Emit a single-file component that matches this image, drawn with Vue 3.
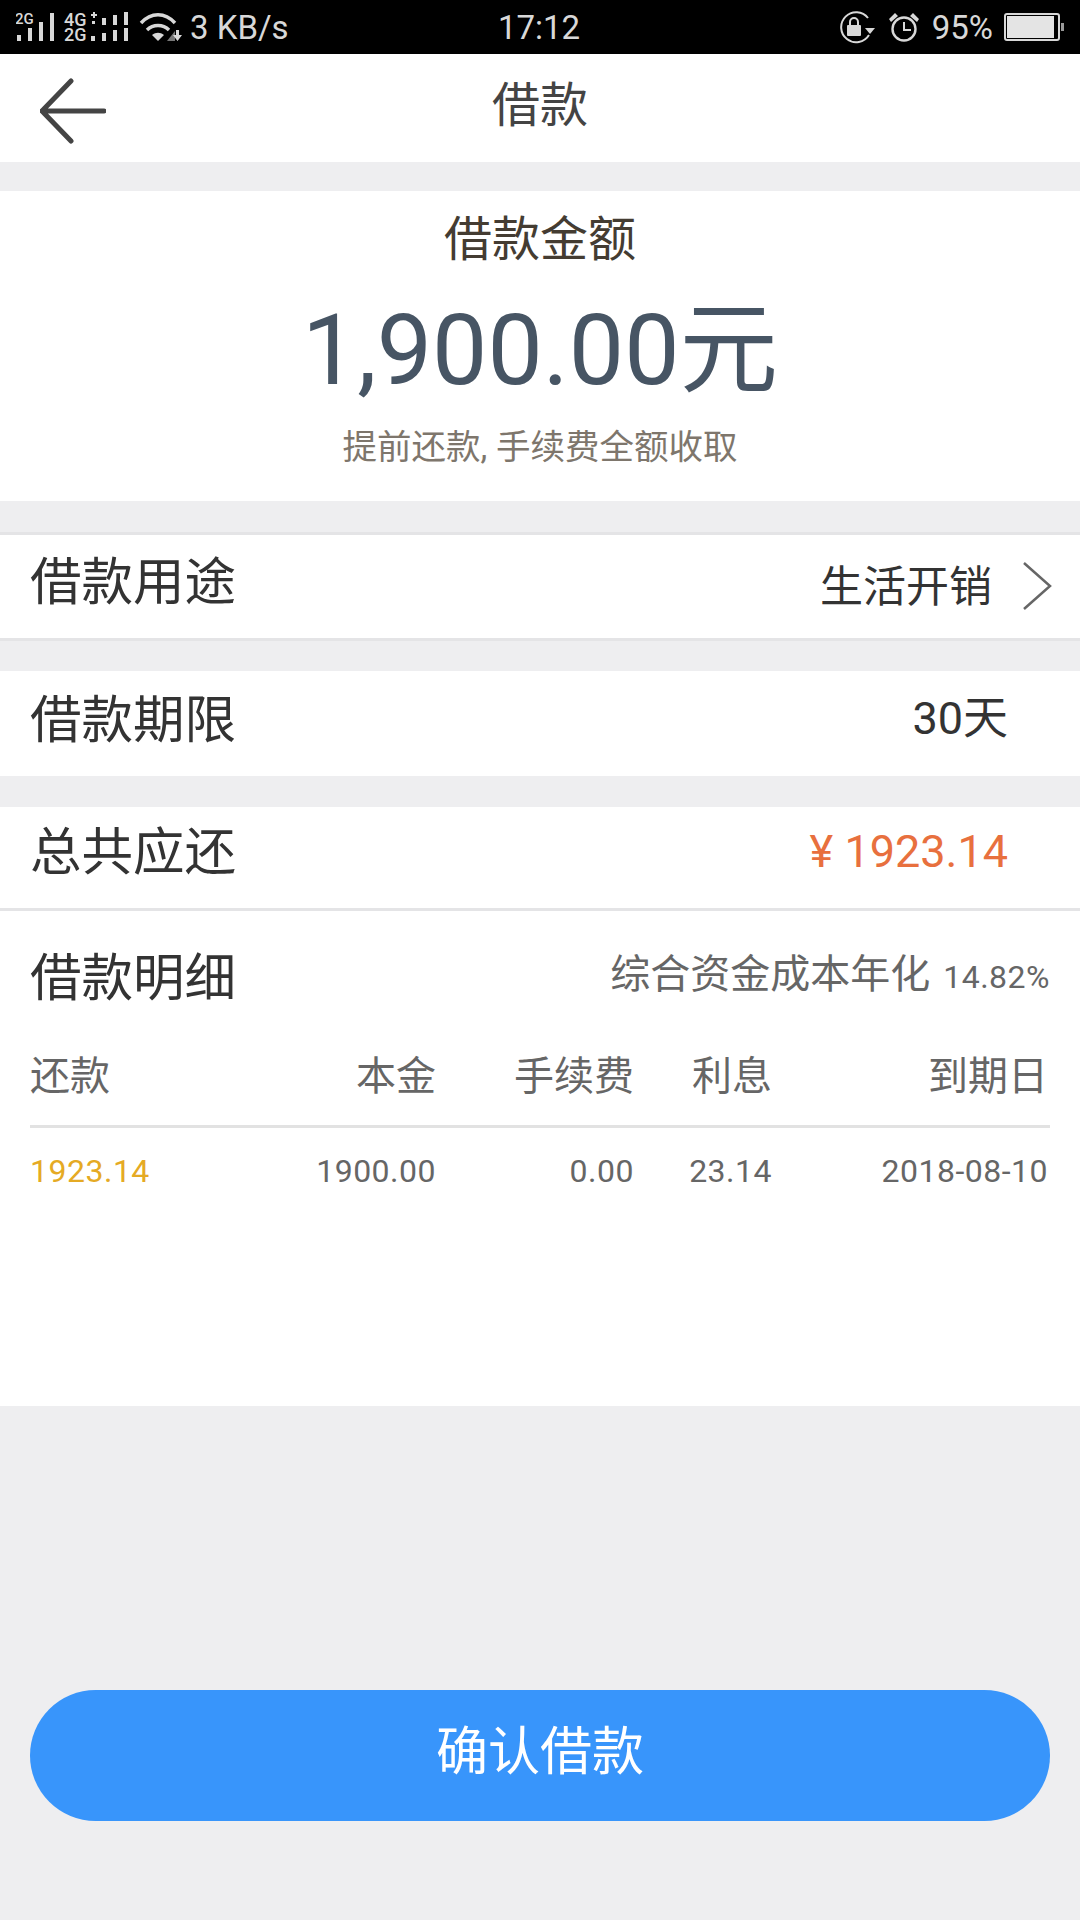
<script setup>
const cols = [
  { head: '还款', val: '1923.14', cls: 'gold left' },
  { head: '本金', val: '1900.00', cls: '' },
  { head: '手续费', val: '0.00', cls: '' },
  { head: '利息', val: '23.14', cls: '' },
  { head: '到期日', val: '2018-08-10', cls: '' }
]
</script>

<template>
  <div class="page">
    <div class="status">
      <div class="st-left">
        <svg class="sig1" width="174" height="54" viewBox="16 0 174 54">
          <text x="15" y="24" class="tiny">2G</text>
          <rect x="17" y="35" width="4" height="6" /><rect x="28" y="28" width="4" height="13" />
          <rect x="39" y="22" width="4" height="19" /><rect x="50" y="13" width="4" height="28" />
          <text x="64" y="26" class="tiny2">4G</text><text x="64" y="41" class="tiny2">2G</text>
          <path d="M93 12h2v2h2v2h-2v2h-2v-2h-2v-2h2z" />
          <rect x="92" y="21" width="3" height="3" /><rect x="91" y="36" width="4" height="5" />
          <rect x="102" y="18" width="4" height="7" /><rect x="102" y="33" width="4" height="8" />
          <rect x="113" y="15" width="4" height="10" /><rect x="113" y="30" width="4" height="11" />
          <rect x="124" y="12" width="4" height="13" /><rect x="124" y="28" width="4" height="13" />
          <g fill="none" stroke="#d8d8d8" stroke-width="3.4">
            <path d="M141 23C151 12 165 12 175 23" /><path d="M147 30C153 24 163 24 169 30" />
          </g>
          <path d="M152 35c4-3 8-3 12 0l-6 6z" />
          <path d="M167 41l8-10v10z" fill="#777" />
          <path d="M176 30h3v5h3l-4.500 6-4.500-6h3z" />
        </svg>
        <span>3 KB/s</span>
      </div>
      <div class="st-time">17:12</div>
      <div class="st-right">
        <svg width="37" height="33" viewBox="0 0 37 33">
          <path d="M30 24A15 15 0 1 1 29 7" fill="none" stroke="#d8d8d8" stroke-width="2" />
          <path d="M26 17h10l-5 6z" fill="#d8d8d8" />
          <rect x="8" y="14" width="14" height="11" rx="1" fill="#d8d8d8" />
          <path d="M11 14v-3a4 4 0 0 1 8 0v3" fill="none" stroke="#d8d8d8" stroke-width="2" />
        </svg>
        <svg class="alarm" width="32" height="32" viewBox="0 0 32 32">
          <circle cx="16" cy="18" r="11.500" fill="none" stroke="#d8d8d8" stroke-width="2.400" />
          <path d="M16 11v8h7" fill="none" stroke="#d8d8d8" stroke-width="2" />
          <path d="M1 8l6-6 3 3-7 6zM31 8l-6-6-3 3 7 6z" fill="#d8d8d8" />
        </svg>
        <span class="pct">95%</span>
        <div class="battery"><div class="fill"></div></div>
        <div class="nub"></div>
      </div>
    </div>

    <header class="nav">
      <svg class="back" width="66" height="66" viewBox="0 0 66 66">
        <path d="M31 3L2 33l29 30M2 33h62" fill="none" stroke="#444" stroke-width="5" stroke-linecap="round" stroke-linejoin="round" />
      </svg>
      <h1 class="nav-title">借款</h1>
    </header>

    <section class="amount">
      <div class="amount-label">借款金额</div>
      <div class="amount-value">1,900.00元</div>
      <div class="amount-note">提前还款, 手续费全额收取</div>
    </section>

    <section class="row row-purpose">
      <span class="row-label">借款用途</span>
      <span class="row-value">生活开销</span>
      <svg class="chev" width="30" height="50" viewBox="0 0 30 50">
        <path d="M2 2l26 23L2 48" fill="none" stroke="#666" stroke-width="2.500" />
      </svg>
    </section>

    <section class="row row-term">
      <span class="row-label">借款期限</span>
      <span class="row-value big">30天</span>
    </section>

    <section class="row row-total">
      <span class="row-label">总共应还</span>
      <span class="row-value big orange">¥ 1923.14</span>
    </section>

    <section class="detail">
      <div class="detail-head">
        <span class="row-label">借款明细</span>
        <span class="rate"><span class="rate-name">综合资金成本年化</span><span class="rate-num">14.82%</span></span>
      </div>
      <div class="table heads">
        <div v-for="c in cols" :key="c.head" :class="c.cls.includes('left') ? 'left' : ''">{{ c.head }}</div>
      </div>
      <div class="table vals">
        <div v-for="c in cols" :key="c.val" :class="c.cls">{{ c.val }}</div>
      </div>
    </section>

    <div class="spacer"></div>
    <button class="confirm"><span class="confirm-text">确认借款</span></button>
  </div>
</template>

<style>
html, body { margin: 0; padding: 0; background: #eeeef0; }
</style>

<style scoped>
.page {
  width: 1080px;
  height: 1920px;
  background: #eeeef0;
  display: flex;
  flex-direction: column;
  overflow: hidden;
  font-family: Roboto, "Noto Sans CJK SC", sans-serif;
}
.status {
  height: 54px;
  background: #000;
  color: #d8d8d8;
  display: grid;
  grid-template-columns: 1fr auto 1fr;
  align-items: center;
  font-size: 33px;
  flex: none;
}
.st-left { display: flex; align-items: center; padding-left: 16px; }
.sig1 { fill: #d8d8d8; flex: none; }
.tiny { font-size: 15px; font-family: Roboto, sans-serif; font-weight: 500; }
.tiny2 { font-size: 18px; font-family: Roboto, sans-serif; font-weight: 500; }
.st-time { font-size: 33px; margin-left: -2px; }
.st-right { display: flex; align-items: center; justify-content: flex-end; padding-right: 16px; }
.alarm { margin-left: 12px; }
.pct { margin-left: 12px; }
.battery {
  margin-left: 11px;
  width: 50px;
  height: 22px;
  border: 2px solid #d8d8d8;
  border-radius: 3px;
  padding: 1px;
  display: flex;
}
.fill { width: 94%; background: #e4e4e4; }
.nub { width: 3px; height: 8px; background: #999; margin-left: 1px; }

.nav {
  height: 108px;
  background: #fff;
  flex: none;
  position: relative;
  display: flex;
  align-items: center;
  justify-content: center;
}
.back { position: absolute; left: 40px; top: 24px; }
.nav-title { margin: 0 0 14px; font-size: 48px; font-weight: 400; color: #444; }

.amount {
  margin-top: 29px;
  height: 310px;
  background: #fff;
  flex: none;
  display: flex;
  flex-direction: column;
  align-items: center;
}
.amount-label { font-size: 48px; color: #443c32; line-height: 56px; margin-top: 21px; }
.amount-value { font-size: 98.500px; color: #475564; line-height: 116px; margin-top: 25px; }
.amount-note { font-size: 34.500px; color: #7e766c; line-height: 44px; margin-top: 16px; }

.row {
  background: #fff;
  flex: none;
  display: flex;
  align-items: center;
  padding: 0 30px;
}
.row-purpose {
  margin-top: 31px;
  height: 103px;
  border-top: 3px solid #e4e4e6;
  border-bottom: 3px solid #e4e4e6;
}
.row-term { margin-top: 30px; height: 105px; }
.row-total { margin-top: 31px; height: 101px; border-bottom: 3px solid #e4e4e6; }
.row-label { font-size: 51.500px; color: #333; flex: 1; margin-bottom: 18px; }
.row-term .row-label { margin-bottom: 16px; }
.row-total .row-label { margin-bottom: 20px; }
.row-value { font-size: 43px; color: #333; margin-bottom: 8px; }
.big { font-size: 45px; }
.chev { margin-left: 30px; margin-right: -2px; margin-bottom: 2px; }
.row-term .row-value { margin-right: 42px; margin-bottom: 18px; }
.row-total .row-value { margin-right: 42px; margin-bottom: 12px; }
.orange { color: #e8703e; }

.detail {
  height: 495px;
  background: #fff;
  flex: none;
  padding: 0 30px;
  box-sizing: border-box;
}
.detail-head { display: flex; align-items: center; height: 125px; }
.detail-head .row-label { margin-bottom: 0; }
.rate { color: #666; white-space: nowrap; margin-bottom: 6px; }
.rate-name { font-size: 40px; }
.rate-num { font-size: 32px; letter-spacing: 0.5px; margin-left: 13px; }
.table {
  display: grid;
  grid-template-columns: 150px 256px 198px 138px 278px;
  color: #666;
  text-align: right;
  box-sizing: border-box;
}
.heads { font-size: 40px; height: 92px; line-height: 82px; border-bottom: 3px solid #e2e2e2; }
.heads > div:last-child, .vals > div:last-child { margin-right: 2px; }
.vals { font-size: 32px; height: 90px; line-height: 86px; letter-spacing: 0.5px; }
.left { text-align: left; }
.gold { color: #e5aa24; }

.spacer { flex: 1; }
.confirm {
  flex: none;
  margin: 0 30px 99px;
  width: 1020px;
  height: 131px;
  border: 0;
  border-radius: 66px;
  background: #3895fb;
  color: #fff;
  font-family: inherit;
  font-size: 52px;
}
.confirm-text { display: block; margin-bottom: 16px; }
</style>
